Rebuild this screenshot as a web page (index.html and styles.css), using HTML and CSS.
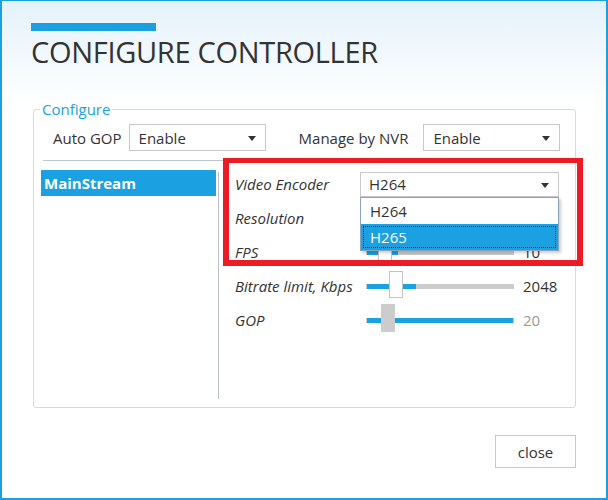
FILE: index.html
```html
<!DOCTYPE html>
<html lang="en">
  <head>
    <title>Configure Controller</title>

    <link rel="stylesheet" href="styles.css">
  </head>

  <body>
    <div class="window">
      <div class="accent"></div>
      <h1 class="title">CONFIGURE CONTROLLER</h1>

      <fieldset class="group">
        <legend>Configure</legend>

        <div class="top-row">
          <span class="label">Auto GOP</span>
          <div class="combo"><span>Enable</span><i class="caret"></i></div>
          <span class="label nvr">Manage by NVR</span>
          <div class="combo"><span>Enable</span><i class="caret"></i></div>
        </div>

        <div class="panes">
          <ul class="streams">
            <li class="selected">MainStream</li>
          </ul>

          <div class="settings">
            <div class="row">
              <span class="field">Video Encoder</span>
              <div class="combo wide">
                <span>H264</span><i class="caret"></i>
                <ul class="dropdown">
                  <li>H264</li>
                  <li class="active">H265</li>
                </ul>
              </div>
            </div>
            <div class="row">
              <span class="field">Resolution</span>
              <div class="combo wide"></div>
            </div>
            <div class="row">
              <span class="field">FPS</span>
              <div class="slider">
                <div class="fill" style="width: 31px"></div>
                <div class="thumb" style="left: 12px"></div>
              </div>
              <span class="value">10</span>
            </div>
            <div class="row">
              <span class="field">Bitrate limit, Kbps</span>
              <div class="slider">
                <div class="fill" style="width: 49px"></div>
                <div class="thumb" style="left: 23px"></div>
              </div>
              <span class="value">2048</span>
            </div>
            <div class="row">
              <span class="field">GOP</span>
              <div class="slider">
                <div class="fill" style="width: 146px"></div>
                <div class="thumb locked" style="left: 15px"></div>
              </div>
              <span class="value muted">20</span>
            </div>
          </div>
        </div>
      </fieldset>

      <div class="footer">
        <button class="close">close</button>
      </div>

      <div class="highlight"></div>
    </div>
  </body>
</html>
```

FILE: styles.css
```css
body {
  margin: 0;
  font-family: "Open Sans", "Noto Sans", sans-serif;
  font-size: 15px;
  color: #333;
}
.window {
  position: relative;
  width: 608px;
  height: 500px;
  box-sizing: border-box;
  border: 2px solid rgb(27, 161, 226);
  border-top-width: 1px;
  background: linear-gradient(to bottom, rgb(228, 242, 251), rgb(255, 255, 255) 105px);
  padding: 0 30px 0 29px;
}
.accent {
  margin-top: 22px;
  width: 125px;
  height: 8px;
  background: rgb(27, 161, 226);
}
.title {
  margin: 6px 0 0;
  font-size: 29px;
  font-weight: 400;
  line-height: 29px;
  color: #333;
  letter-spacing: -0.3px;
}

/* group box */
.group {
  margin: 33px 0 0 2px;
  padding: 5px 7px 8px;
  border: 1px solid rgb(211, 219, 226);
  border-radius: 3px;
}
.group legend {
  margin-left: -1px;
  padding: 0 2px;
  line-height: 20px;
  color: rgb(27, 161, 226);
}
.top-row {
  display: flex;
  align-items: center;
  height: 27px;
  padding-left: 12px;
}
.label {
  margin-right: 7px;
}
.label.nvr {
  margin-left: 33px;
  margin-right: 15px;
}

/* combo boxes */
.combo {
  position: relative;
  display: flex;
  align-items: center;
  width: 137px;
  height: 27px;
  box-sizing: border-box;
  border: 1px solid rgb(200, 200, 200);
  background: white;
  padding-left: 9px;
}
.combo .caret {
  position: absolute;
  right: 9px;
  top: 11px;
  border-left: 4px solid transparent;
  border-right: 4px solid transparent;
  border-top: 5px solid #333;
}
.combo.wide {
  width: 199px;
  height: 25px;
  padding-left: 8px;
}
.combo.wide .caret {
  top: 10px;
}
.dropdown {
  position: absolute;
  top: 24px;
  left: -1px;
  width: 199px;
  box-sizing: border-box;
  margin: 0;
  padding: 0;
  list-style: none;
  background: white;
  border: 1px solid rgb(138, 164, 192);
  box-shadow: 2px 2px 3px rgba(0, 0, 0, 0.2);
  z-index: 2;
}
.dropdown li {
  height: 26px;
  line-height: 26px;
  padding-left: 9px;
}
.dropdown li.active {
  background: rgb(27, 161, 226);
  color: white;
  outline: 1px dotted #222;
  outline-offset: -3px;
}

/* stream list and settings */
.panes {
  display: flex;
  height: 238px;
  margin-top: 9px;
  border-top: 1px solid rgb(190, 198, 205);
  margin-left: 2px;
}
.streams {
  width: 175px;
  margin: 11px 0 0 -2px;
  padding: 0 2px 0 0;
  list-style: none;
  border-right: 1px solid rgb(184, 192, 200);
}
.streams li {
  margin-top: -2px;
  height: 26px;
  line-height: 26px;
  padding-left: 3px;
  font-weight: 700;
}
.streams li.selected {
  background: rgb(27, 161, 226);
  color: white;
}
.settings {
  padding: 6px 0 0 16px;
}
.row {
  display: flex;
  align-items: center;
  height: 34px;
}
.field {
  width: 125px;
  font-style: italic;
}
.slider {
  position: relative;
  width: 148px;
  height: 5px;
  margin-left: 6px;
  background: rgb(204, 204, 204);
}
.slider .fill {
  height: 5px;
  margin-left: 1px;
  background: rgb(27, 161, 226);
}
.slider .thumb {
  position: absolute;
  top: -13px;
  width: 14px;
  height: 27px;
  box-sizing: border-box;
  border: 1px solid rgb(196, 196, 196);
  background: white;
}
.slider .thumb.locked {
  top: -14px;
  height: 28px;
  border: none;
  background: rgb(204, 204, 204);
}
.value {
  margin-left: 9px;
}
.value.muted {
  color: #999;
}

/* footer */
.footer {
  display: flex;
  justify-content: flex-end;
  margin-top: 27px;
}
.close {
  width: 81px;
  height: 33px;
  border: 1px solid rgb(200, 200, 200);
  background: white;
  font-family: inherit;
  font-size: 15px;
  color: #333;
}

/* red marker round the encoder rows */
.highlight {
  position: absolute;
  left: 221px;
  top: 157px;
  width: 360px;
  height: 108px;
  box-sizing: border-box;
  border: 6px solid rgb(237, 28, 36);
  border-top-width: 5px;
  z-index: 3;
}
```
